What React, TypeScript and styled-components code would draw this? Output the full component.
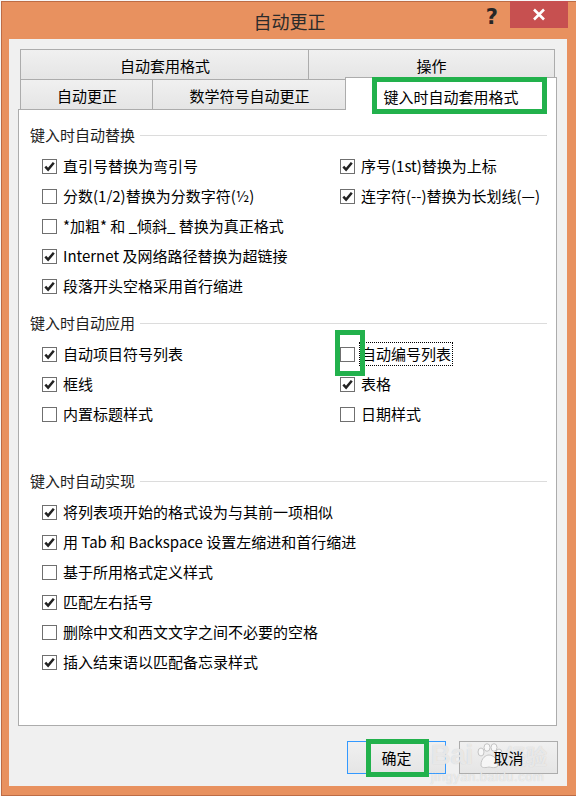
import React from "react"
import styled, { createGlobalStyle } from "styled-components"

const GlobalStyle = createGlobalStyle`
  html, body { margin: 0; padding: 0; background: #f7f7f7; }
  body { font-family: "Noto Sans CJK SC", "Noto Sans", sans-serif; color: #000; }
  * { box-sizing: border-box; }
`

const Screen = styled.div`
  width: 576px;
  height: 796px;
  overflow: hidden;
  padding: 1px 0 0 1px;
`
const Window = styled.div`
  width: 577px;
  height: 795px;
  background: #e8915f;
  border: 1px solid #bd6c45;
  display: flex;
  flex-direction: column;
`
const TitleBar = styled.div`
  height: 37px;
  flex: none;
  display: grid;
  grid-template-columns: 1fr auto 1fr;
  align-items: center;
`
const Title = styled.div`
  grid-column: 2;
  font-size: 18px;
  line-height: 22px;
  color: #2b2b2b;
  padding-top: 1px;
`
const Controls = styled.div`
  grid-column: 3;
  justify-self: end;
  align-self: start;
  display: flex;
  align-items: flex-start;
  gap: 12px;
  margin-top: -1px;
  padding-right: 9px;
`
const Help = styled.div`
  font-family: "DejaVu Sans", sans-serif;
  font-weight: bold;
  font-size: 21px;
  line-height: 26px;
  color: #262626;
  padding-top: 3px;
`
const CloseBtn = styled.div`
  width: 58px;
  height: 27px;
  background: #c75050;
  display: flex;
  align-items: center;
  justify-content: center;
`
const Client = styled.div`
  flex: 1;
  margin: 0 10px 9px 7px;
  background: #f0f0f0;
  padding: 10px 10px 12px 9px;
  display: flex;
  flex-direction: column;
  position: relative;
`
const TabStrip = styled.div`
  padding: 0 2px;
  display: flex;
  flex-direction: column;
`
const TabRow = styled.div`
  display: flex;
  & + & { margin-top: -1px; }
`
const Tab = styled.div<{ $w: number; $active?: boolean }>`
  width: ${p => p.$w}px;
  height: 31px;
  flex: none;
  border: 1px solid #acacac;
  background: linear-gradient(#f0f0f0, #e5e5e5);
  font-size: 15px;
  line-height: 20px;
  display: flex;
  justify-content: center;
  align-items: center;
  padding-top: 3px;
  & + & { margin-left: -1px; }
  ${p => p.$active && `
    position: relative;
    z-index: 2;
    background: #fff;
    border-bottom: none;
    height: 33px;
    margin: -2px -2px -1px -2px;
    padding-top: 6px;
    & + & { margin-left: -2px; }
  `}
`
const Panel = styled.div`
  flex: 1;
  margin-top: -1px;
  background: #fff;
  border: 1px solid #acacac;
  padding: 15px 9px 0 11px;
`
const Section = styled.div<{ $after: number }>`
  margin-bottom: ${p => p.$after}px;
`
const Heading = styled.div`
  display: flex;
  align-items: center;
  gap: 5px;
  font-size: 15px;
  line-height: 20px;
  color: #1e1e1e;
  &::after {
    content: "";
    flex: 1;
    height: 1px;
    background: #dcdcdc;
  }
`
const Options = styled.div`
  margin-top: 6px;
  padding-left: 12px;
  display: grid;
  grid-template-columns: 298px 1fr;
`
const Column = styled.div`
  display: flex;
  flex-direction: column;
`
const Row = styled.div`
  height: 30px;
  display: flex;
  align-items: center;
  gap: 6px;
`
const Box = styled.div`
  width: 15px;
  height: 15px;
  flex: none;
  border: 1px solid #6f6f6f;
  background: #fff;
  position: relative;
  display: flex;
  align-items: center;
  justify-content: center;
`
const Label = styled.span<{ $focus?: boolean }>`
  font-size: 15px;
  line-height: 20px;
  white-space: nowrap;
  ${p => p.$focus && `
    outline: 1px dotted #000;
    outline-offset: 1px;
  `}
`
const Mark = styled.div<{ $t: number; $r: number; $b: number; $l: number; $w?: number }>`
  position: absolute;
  top: ${p => p.$t}px;
  right: ${p => p.$r}px;
  bottom: ${p => p.$b}px;
  left: ${p => p.$l}px;
  border: ${p => p.$w ?? 5}px solid #22b14c;
  z-index: 3;
  pointer-events: none;
`
const Buttons = styled.div`
  margin-top: 15px;
  display: flex;
  justify-content: flex-end;
  gap: 13px;
  margin-right: -1px;
`
const Button = styled.div<{ $default?: boolean }>`
  width: 99px;
  height: 33px;
  position: relative;
  border: 1px solid ${p => (p.$default ? "#3399ff" : "#acacac")};
  background: linear-gradient(#f0f0f0, #e5e5e5);
  font-size: 15px;
  display: flex;
  align-items: center;
  justify-content: center;
`
const ButtonText = styled.span`
  position: relative;
  z-index: 5;
`
const Watermark = styled.div`
  position: absolute;
  right: 20px;
  bottom: 2px;
  display: flex;
  flex-direction: column;
  align-items: flex-start;
  color: rgba(255, 255, 255, 0.6);
  text-shadow: 0 0 1px #c4c4c4;
  pointer-events: none;
  z-index: 4;
`
const WaterLogo = styled.div`
  display: flex;
  align-items: flex-end;
  gap: 2px;
  font-family: "Liberation Sans", Arial, sans-serif;
  font-weight: bold;
  font-size: 27px;
  line-height: 28px;
  span { font-family: "Noto Sans CJK SC", sans-serif; font-size: 21px; font-weight: bold; }
`
const WaterUrl = styled.div`
  font-family: "Liberation Sans", Arial, sans-serif;
  font-size: 13px;
  line-height: 14px;
  letter-spacing: 0.5px;
  margin-top: 1px;
`

const Check = () => (
  <svg width="13" height="13" viewBox="0 0 13 13">
    <path d="M2.3 6.6 L5.1 9.6 L10.8 2.8" fill="none" stroke="#222" strokeWidth="2.5" />
  </svg>
)

type Opt = { text: string; on: boolean; focus?: boolean; mark?: boolean }

const Option = ({ opt }: { opt: Opt }) => (
  <Row>
    <Box>
      {opt.on && <Check />}
      {opt.mark && <Mark $t={-18} $r={-11} $b={-15} $l={-6} />}
    </Box>
    <Label $focus={opt.focus}>{opt.text}</Label>
  </Row>
)

const replaceLeft: Opt[] = [
  { text: "直引号替换为弯引号", on: true },
  { text: "分数(1/2)替换为分数字符(½)", on: false },
  { text: "*加粗* 和 _倾斜_ 替换为真正格式", on: false },
  { text: "Internet 及网络路径替换为超链接", on: true },
  { text: "段落开头空格采用首行缩进", on: true },
]
const replaceRight: Opt[] = [
  { text: "序号(1st)替换为上标", on: true },
  { text: "连字符(--)替换为长划线(—)", on: true },
]
const applyLeft: Opt[] = [
  { text: "自动项目符号列表", on: true },
  { text: "框线", on: true },
  { text: "内置标题样式", on: false },
]
const applyRight: Opt[] = [
  { text: "自动编号列表", on: false, focus: true, mark: true },
  { text: "表格", on: true },
  { text: "日期样式", on: false },
]
const doList: Opt[] = [
  { text: "将列表项开始的格式设为与其前一项相似", on: true },
  { text: "用 Tab 和 Backspace 设置左缩进和首行缩进", on: true },
  { text: "基于所用格式定义样式", on: false },
  { text: "匹配左右括号", on: true },
  { text: "删除中文和西文文字之间不必要的空格", on: false },
  { text: "插入结束语以匹配备忘录样式", on: true },
]

export default function App() {
  return (
    <Screen>
      <GlobalStyle />
      <Window>
        <TitleBar>
          <Title>自动更正</Title>
          <Controls>
            <Help>?</Help>
            <CloseBtn>
              <svg width="14" height="13" viewBox="0 0 14 13">
                <path d="M2 1.5 L12 11.5 M12 1.5 L2 11.5" stroke="#fff" strokeWidth="2.6" />
              </svg>
            </CloseBtn>
          </Controls>
        </TitleBar>
        <Client>
          <TabStrip>
            <TabRow>
              <Tab $w={290}>自动套用格式</Tab>
              <Tab $w={247}>操作</Tab>
            </TabRow>
            <TabRow>
              <Tab $w={134}>自动更正</Tab>
              <Tab $w={195}>数学符号自动更正</Tab>
              <Tab $w={212} $active>
                键入时自动套用格式
                <Mark $t={-1} $r={9} $b={-4} $l={26} $w={5} />
              </Tab>
            </TabRow>
          </TabStrip>
          <Panel>
            <Section $after={12}>
              <Heading>键入时自动替换</Heading>
              <Options>
                <Column>{replaceLeft.map(o => <Option key={o.text} opt={o} />)}</Column>
                <Column>{replaceRight.map(o => <Option key={o.text} opt={o} />)}</Column>
              </Options>
            </Section>
            <Section $after={42}>
              <Heading>键入时自动应用</Heading>
              <Options>
                <Column>{applyLeft.map(o => <Option key={o.text} opt={o} />)}</Column>
                <Column>{applyRight.map(o => <Option key={o.text} opt={o} />)}</Column>
              </Options>
            </Section>
            <Section $after={0}>
              <Heading>键入时自动实现</Heading>
              <Options>
                <Column>{doList.map(o => <Option key={o.text} opt={o} />)}</Column>
              </Options>
            </Section>
          </Panel>
          <Buttons>
            <Button $default>
              <ButtonText>确定</ButtonText>
              <Mark $t={-3} $r={16} $b={-4} $l={18} $w={5} />
            </Button>
            <Button>
              <ButtonText>取消</ButtonText>
            </Button>
          </Buttons>
          <Watermark>
            <WaterLogo>
              Bai
              <svg width="28" height="26" viewBox="0 0 28 26">
                <g fill="rgba(255,255,255,0.6)" stroke="#c4c4c4" strokeWidth="1">
                  <ellipse cx="6" cy="9" rx="3" ry="4" />
                  <ellipse cx="12" cy="4.5" rx="3" ry="3.8" />
                  <ellipse cx="19" cy="4.5" rx="3" ry="3.8" />
                  <ellipse cx="24" cy="10" rx="3" ry="4" />
                  <path d="M6 22 C6 15 11 12 14 12 C18 12 23 16 23 22 C23 25 18 25 14 24 C10 25 6 25 6 22 Z" />
                </g>
              </svg>
              <span>经验</span>
            </WaterLogo>
            <WaterUrl>jingyan.baidu.com</WaterUrl>
          </Watermark>
        </Client>
      </Window>
    </Screen>
  )
}
